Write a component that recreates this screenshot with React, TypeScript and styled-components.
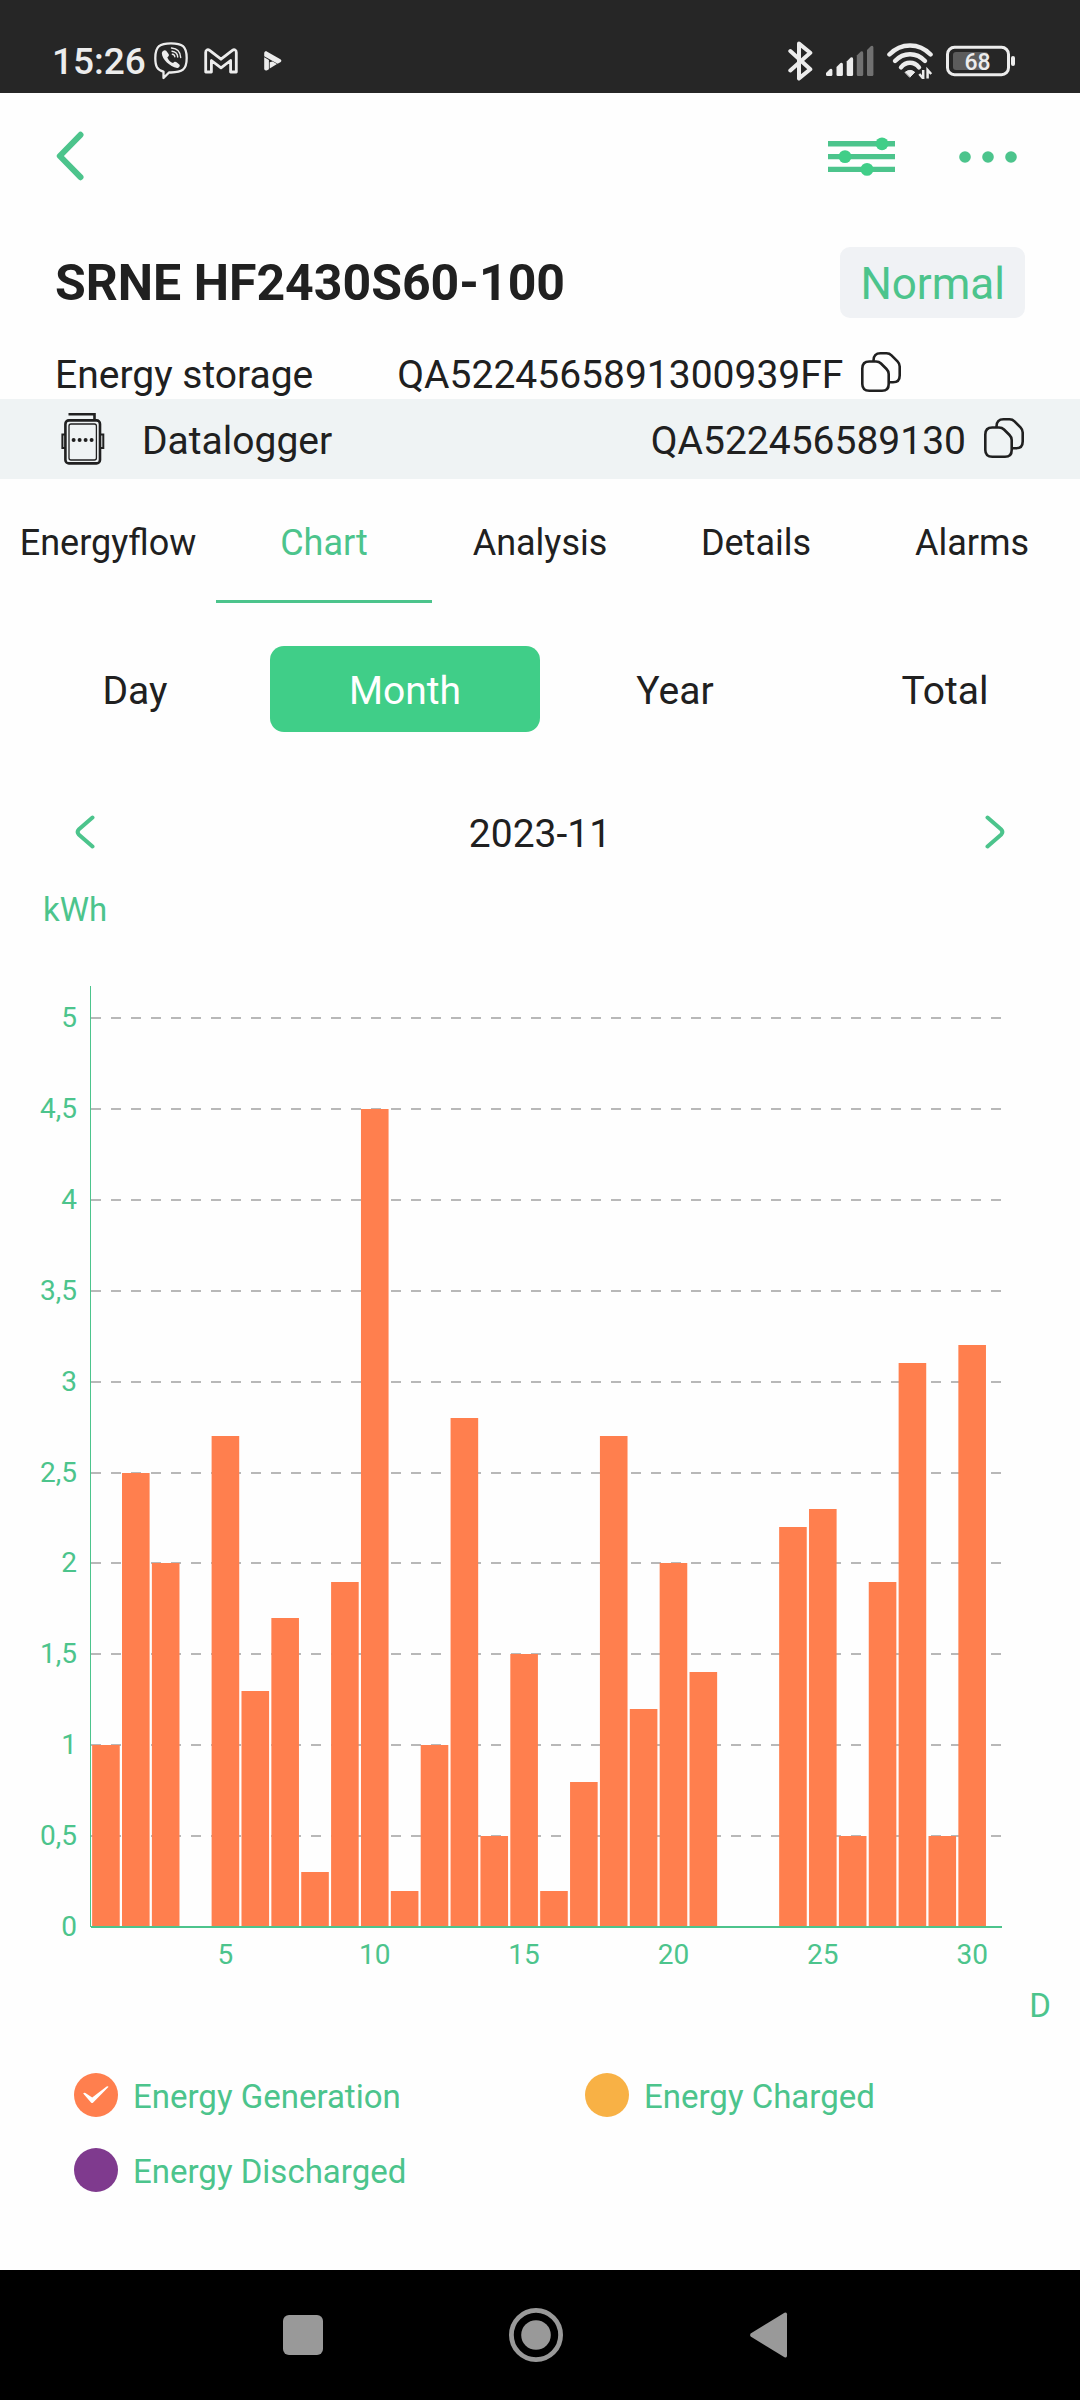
import React, { useState } from 'react';
import styled, { createGlobalStyle } from 'styled-components';

const color = {
  green: '#40ce88',
  line: '#4cc48c',
  text: '#202020',
  page: '#fefefe',
  band: '#eff3f4',
  badge: '#f0f2f5',
  orange: '#ff7f4e',
  amber: '#f8b145',
  purple: '#7f3a8e',
  grid: '#b8b8b8',
  status: '#ececec',
  nav: '#999999',
};

const GlobalStyle = createGlobalStyle`
  *, *::before, *::after { box-sizing: border-box; }
  body {
    margin: 0;
    background: ${color.page};
    color: ${color.text};
    font-family: Roboto, "Noto Sans", sans-serif;
  }
  svg { display: block; }
  button {
    border: 0;
    padding: 0;
    background: none;
    color: inherit;
    font: inherit;
    cursor: pointer;
  }
`;

const Screen = styled.div`
  display: flex;
  flex-direction: column;
  min-height: 100vh;
`;

const StatusBar = styled.header`
  display: flex;
  justify-content: space-between;
  padding: 39px 64px 10px 52px;
  background: #262626;
  color: ${color.status};
`;

const StatusGroup = styled.div<{ $gap: number }>`
  display: flex;
  align-items: center;
  gap: ${(p) => p.$gap}px;
  height: 44px;
`;

const Clock = styled.time`
  padding-top: 2px;
  font-size: 37px;
  font-weight: 500;
  line-height: 42px;
`;

const NotificationIcons = styled.div`
  display: flex;
  align-items: center;
  gap: 16px;
`;

const PlayMark = styled.span`
  padding-left: 10px;
`;

const Content = styled.main`
  flex: 1;
  padding-bottom: 78px;
`;

const TopBar = styled.nav`
  display: flex;
  align-items: center;
  justify-content: space-between;
  min-height: 126px;
  padding: 0 63px 0 55px;
`;

const TopActions = styled.div`
  display: flex;
  align-items: center;
  gap: 63px;
`;

const DeviceHead = styled.section`
  padding: 28px 55px 0;
`;

const TitleRow = styled.div`
  display: flex;
  align-items: center;
  justify-content: space-between;
`;

const Title = styled.h1`
  margin: 0;
  font-size: 50px;
  font-weight: 700;
  line-height: 60px;
`;

const Badge = styled.span`
  padding: 11px 20px 8px;
  border-radius: 10px;
  background: ${color.badge};
  color: ${color.line};
  font-size: 44px;
  line-height: 52px;
`;

const InfoRow = styled.div`
  display: flex;
  align-items: center;
  gap: 84px;
  padding-top: 33px;
  font-size: 39px;
  line-height: 48px;
`;

const Serial = styled.span`
  display: flex;
  align-items: center;
  gap: 18px;
`;

const LoggerBand = styled.section`
  display: flex;
  align-items: center;
  justify-content: space-between;
  padding: 18px 56px 14px 61px;
  background: ${color.band};
  font-size: 39px;
  line-height: 48px;
`;

const LoggerName = styled.span`
  display: flex;
  align-items: center;
  gap: 37px;
  height: 48px;
`;

const Tabs = styled.div`
  display: grid;
  grid-template-columns: repeat(5, 1fr);
`;

const Tab = styled.button<{ $active: boolean }>`
  && {
    padding: 43px 0 36px;
    border-bottom: 3px solid ${(p) => (p.$active ? color.line : 'transparent')};
    color: ${(p) => (p.$active ? color.line : color.text)};
    font-size: 36px;
    line-height: 42px;
    text-align: center;
  }
`;

const Periods = styled.div`
  display: grid;
  grid-template-columns: repeat(4, 1fr);
  margin-top: 43px;
`;

const Period = styled.button<{ $active: boolean }>`
  && {
    padding: 22px 0 18px;
    border-radius: 14px;
    background: ${(p) => (p.$active ? color.green : 'transparent')};
    color: ${(p) => (p.$active ? '#fff' : color.text)};
    font-size: 39px;
    line-height: 46px;
  }
`;

const DateRow = styled.div`
  display: flex;
  align-items: center;
  justify-content: space-between;
  padding: 79px 74px 0;
  font-size: 39px;
  line-height: 46px;
`;

const Unit = styled.p<{ $end?: boolean }>`
  margin: 0;
  padding: ${(p) => (p.$end ? '16px 29px 0' : '33px 43px 0')};
  color: ${color.line};
  font-size: 33px;
  line-height: 40px;
  text-align: ${(p) => (p.$end ? 'right' : 'left')};
`;

const ChartSvg = styled.svg`
  width: 100%;
  height: auto;

  text {
    fill: ${color.line};
    font-size: 28px;
  }
`;

const Legend = styled.div`
  display: grid;
  grid-template-columns: repeat(2, 1fr);
  gap: 31px 0;
  padding: 47px 0 0 74px;
  margin-right: -16px;
  overflow: hidden;
`;

const LegendItem = styled.label`
  display: flex;
  align-items: center;
  gap: 15px;
  color: ${color.line};
  font-size: 33px;
  line-height: 40px;
  cursor: pointer;
`;

const LegendText = styled.span`
  padding-top: 4px;
`;

const Mark = styled.span`
  display: grid;
  place-items: center;

  > * {
    grid-area: 1 / 1;
  }

  svg {
    pointer-events: none;
  }
`;

const Check = styled.input<{ $color: string }>`
  appearance: none;
  width: 44px;
  height: 44px;
  margin: 0;
  border-radius: 50%;
  background: ${(p) => p.$color};
`;

const SystemNav = styled.footer`
  display: flex;
  align-items: center;
  justify-content: center;
  gap: 179px;
  height: 130px;
  padding-right: 8px;
  background: #000;
`;

const NavButton = styled.button`
  && {
    display: grid;
    place-items: center;
    width: 54px;
    height: 54px;
  }
`;

const ViberIcon = () => (
  <svg width="34" height="38" viewBox="0 0 34 38" fill="none" stroke="currentColor">
    <path
      d="M17 1.3C28 1.3 32.7 4 32.7 16S28 30.3 17 30.5H15L9.5 36V29.6C3 28 1.3 24 1.3 16 1.3 4 6 1.3 17 1.3Z"
      strokeWidth="2.3"
      strokeLinejoin="round"
    />
    <path
      d="M7.8 11C8.5 8.5 11 7.6 12.2 8.8L14.6 12C15.4 13.4 14.8 14.2 13.3 15.5 14.3 18 16.5 20.2 19 21 20.5 19.4 21.5 19.3 22.6 20.2L25.3 22.4C26.6 23.6 25 26 23 26 16 24.5 8 17.5 7.8 11Z"
      fill="currentColor"
      stroke="none"
    />
    <path d="M17.5 6C23.5 6.5 26.5 10 26.7 15.6M18 9.2C21.7 9.6 23.5 11.6 23.7 15M18.3 12.2C20 12.4 20.7 13.3 20.8 14.8" strokeWidth="1.4" strokeLinecap="round" />
  </svg>
);

const MailIcon = () => (
  <svg width="34" height="26" viewBox="0 0 34 26" fill="none" stroke="currentColor">
    <path
      d="M1.7 24V4.5C1.7 1.8 3.7 .9 5.6 2.4L17 11.2 28.4 2.4C30.3 .9 32.3 1.8 32.3 4.5V24H26.6V12.5L17 19.8 7.4 12.5V24Z"
      strokeWidth="2.8"
      strokeLinejoin="round"
    />
  </svg>
);

const PlayIcon = () => (
  <svg width="18" height="20" viewBox="0 0 18 20" fill="currentColor">
    <path d="M.2 2.2C.4.4 1.8-.1 3.2.7L16.4 8.2C17.7 9.1 17.7 10.3 16.4 11.2L13.6 12.7.2 5.2Z" />
    <path d="M.2 6.2 4.9 8.9V18.3L3.2 19.2C1.5 20 .2 19.2.2 17.6Z" />
    <path d="M5.7 11.2 8.6 10.6 13 13.1 5.7 17.6Z" />
  </svg>
);

const BluetoothIcon = () => (
  <svg width="25" height="40" viewBox="0 0 25 40" fill="none" stroke="currentColor" strokeWidth="4" strokeLinecap="round" strokeLinejoin="round">
    <path d="M2.3 10 22.3 28.3 11 37.4V2.6L22.3 11.7 2.3 29.5" />
  </svg>
);

const SignalIcon = () => (
  <svg width="48" height="32" viewBox="0 0 48 32" fill="currentColor">
    {[
      [0, 23.5],
      [10.5, 17.5],
      [20.7, 12],
      [30.8, 6],
      [41, 0.5],
    ].map(([x, y], i) => (
      <path key={x} opacity={i > 2 ? 0.38 : 1} d={`M${x} ${y + 4.5} ${x + 4} ${y + 0.5}Q${x + 6.4} ${y - 0.5} ${x + 6.4} ${y + 2}V29.5Q${x + 6.4} 31 ${x + 5} 31H${x + 1.4}Q${x} 31 ${x} 29.5Z`} />
    ))}
  </svg>
);

const WifiIcon = () => (
  <svg width="46" height="36" viewBox="0 0 46 36" fill="none" stroke="currentColor" strokeWidth="4.4" strokeLinecap="round">
    <path d="M2.4 11.5C14-.6 32-.6 43.6 11.5" />
    <path d="M8 18C16.5 9 29.5 9 38 18" />
    <path d="M14 24.3C19 18.2 27 18.2 32 24.3" />
    <path d="M18.3 29.2Q23 25.4 27.7 29.2L23 34Z" fill="currentColor" strokeWidth="1" strokeLinejoin="round" />
    <path d="M36.2 27V35.5L32.3 31M40.6 35.5V27L44.2 31" strokeWidth="2.5" strokeLinecap="butt" />
  </svg>
);

const BatteryIcon = () => (
  <svg width="70" height="32" viewBox="0 0 70 32" role="img" aria-label="Battery 68%">
    <rect x="1.5" y="2.3" width="61" height="27.4" rx="7" fill="none" stroke="currentColor" strokeWidth="3" />
    <rect x="7" y="7" width="35" height="18" rx="3" fill="#5c5c5c" />
    <rect x="65" y="11" width="4" height="10" rx="2" fill="currentColor" />
    <text x="31.5" y="24.6" textAnchor="middle" fontSize="23" fontWeight="500" fill="currentColor">68</text>
  </svg>
);

const BackIcon = () => (
  <svg width="30" height="50" viewBox="0 0 30 50" fill="none" stroke={color.line} strokeWidth="6" strokeLinecap="round" strokeLinejoin="round">
    <path d="M25.5 3.8 4.8 25 25.5 46.2" />
  </svg>
);

const SlidersIcon = () => (
  <svg width="68" height="40" viewBox="0 0 68 40">
    <path d="M0 7.8H67M0 20.6H67M0 33.4H67" stroke={color.line} strokeWidth="5.4" />
    <g fill={color.green}>
      <circle cx="54" cy="7.8" r="6.4" />
      <circle cx="17" cy="20.6" r="6.4" />
      <circle cx="39" cy="33.4" r="6.4" />
    </g>
  </svg>
);

const DotsIcon = () => (
  <svg width="58" height="14" viewBox="0 0 58 14" fill={color.line}>
    <circle cx="6" cy="8" r="5.8" />
    <circle cx="29" cy="8" r="5.8" />
    <circle cx="52" cy="8" r="5.8" />
  </svg>
);

const CopyIcon = () => (
  <svg width="40" height="46" viewBox="0 0 40 46" fill="none" stroke={color.text} strokeWidth="2.6" strokeLinejoin="round">
    <path d="M1.3 16.5Q1.3 9.5 8.3 9.5H15Q18 9.5 20 11.5L25.5 17Q27.7 19.2 27.7 22V32Q27.7 38.8 21 38.8H8.3Q1.3 38.8 1.3 32Z" />
    <path d="M12.5 9.5V8.5Q12.5 1.3 19.5 1.3H25.5Q28.5 1.3 30.5 3.3L36.5 9.3Q38.7 11.5 38.7 14.5V23.5Q38.7 30.3 32 30.3H28" />
  </svg>
);

const LoggerIcon = () => (
  <svg width="44" height="58" viewBox="0 0 44 58" fill="none" stroke={color.text}>
    <path d="M7.5 2.2H33.5V8" strokeWidth="2.6" />
    <rect x="4.4" y="8.4" width="34.6" height="43" rx="3.5" strokeWidth="2.6" />
    <rect x="8" y="12" width="27.4" height="36" rx="2" strokeWidth="1.3" />
    <path d="M4 22.5H1.4V36H4M39.4 22.5H42.3V36H39.4" strokeWidth="2" />
    <g fill={color.text} stroke="none">
      <circle cx="12.6" cy="28" r="2" />
      <circle cx="18.6" cy="28" r="2" />
      <circle cx="24.6" cy="28" r="2" />
      <circle cx="30.6" cy="28" r="2" />
    </g>
  </svg>
);

const StepIcon = ({ forward = false }: { forward?: boolean }) => (
  <svg width="22" height="38" viewBox="0 0 22 38" fill="none" stroke={color.line} strokeWidth="4" strokeLinecap="round" strokeLinejoin="round">
    <path d={forward ? 'M3.5 2.5 17.3 14.6Q19.4 17 17.3 19.4L3.5 31.5' : 'M18.5 2.5 4.7 14.6Q2.6 17 4.7 19.4L18.5 31.5'} />
  </svg>
);

const generation = [
  1, 2.5, 2, 0, 2.7, 1.3, 1.7, 0.3, 1.9, 4.5, 0.2, 1, 2.8, 0.5, 1.5,
  0.2, 0.8, 2.7, 1.2, 2, 1.4, 0, 0, 2.2, 2.3, 0.5, 1.9, 3.1, 0.5, 3.2,
];
const ticks = [0, 0.5, 1, 1.5, 2, 2.5, 3, 3.5, 4, 4.5, 5];
const plot = { left: 91, right: 1002, top: 56, base: 997, unit: 181.8, slot: 29.87, bar: 27.6 };

const levelY = (value: number) => Math.round(plot.base - value * plot.unit);

const EnergyChart = ({ visible }: { visible: boolean }) => (
  <ChartSvg viewBox="0 0 1080 1040" role="img" aria-label="Daily energy, November 2023, kWh">
    {ticks.slice(1).map((t) => (
      <line
        key={t}
        x1={plot.left}
        x2={plot.right}
        y1={levelY(t)}
        y2={levelY(t)}
        stroke={color.grid}
        strokeWidth="2"
        strokeDasharray="10 10"
      />
    ))}
    <line x1={plot.left - 0.5} x2={plot.left - 0.5} y1={plot.top} y2={plot.base} stroke={color.line} />
    {visible &&
      generation.map((v, i) => (
        <rect
          key={i}
          x={plot.left + (i + 0.5) * plot.slot - plot.bar / 2}
          y={levelY(v)}
          width={plot.bar}
          height={plot.base - levelY(v)}
          fill={color.orange}
        />
      ))}
    <line x1={plot.left} x2={plot.right} y1={plot.base} y2={plot.base} stroke={color.line} strokeWidth="2" />
    {ticks.map((t) => (
      <text key={t} x="77" y={levelY(t) + 9} textAnchor="end">
        {String(t).replace('.', ',')}
      </text>
    ))}
    {[5, 10, 15, 20, 25, 30].map((d) => (
      <text key={d} x={plot.left + (d - 0.5) * plot.slot} y={plot.base + 37} textAnchor="middle">
        {d}
      </text>
    ))}
  </ChartSvg>
);

const series = [
  { id: 'generation', label: 'Energy Generation', color: color.orange },
  { id: 'charged', label: 'Energy Charged', color: color.amber },
  { id: 'discharged', label: 'Energy Discharged', color: color.purple },
];

export default function App() {
  const [tab, setTab] = useState('Chart');
  const [period, setPeriod] = useState('Month');
  const [shown, setShown] = useState<string[]>(['generation']);

  const toggle = (id: string) =>
    setShown((s) => (s.includes(id) ? s.filter((x) => x !== id) : [...s, id]));

  return (
    <Screen>
      <GlobalStyle />
      <StatusBar>
        <StatusGroup $gap={8}>
          <Clock>15:26</Clock>
          <NotificationIcons>
            <ViberIcon />
            <MailIcon />
            <PlayMark>
              <PlayIcon />
            </PlayMark>
          </NotificationIcons>
        </StatusGroup>
        <StatusGroup $gap={13}>
          <BluetoothIcon />
          <SignalIcon />
          <WifiIcon />
          <BatteryIcon />
        </StatusGroup>
      </StatusBar>

      <Content>
        <TopBar>
          <button type="button" aria-label="Back">
            <BackIcon />
          </button>
          <TopActions>
            <button type="button" aria-label="Settings">
              <SlidersIcon />
            </button>
            <button type="button" aria-label="More">
              <DotsIcon />
            </button>
          </TopActions>
        </TopBar>

        <DeviceHead>
          <TitleRow>
            <Title>SRNE HF2430S60-100</Title>
            <Badge>Normal</Badge>
          </TitleRow>
          <InfoRow>
            <span>Energy storage</span>
            <Serial>
              QA5224565891300939FF
              <button type="button" aria-label="Copy serial number">
                <CopyIcon />
              </button>
            </Serial>
          </InfoRow>
        </DeviceHead>

        <LoggerBand>
          <LoggerName>
            <LoggerIcon />
            Datalogger
          </LoggerName>
          <Serial>
            QA522456589130
            <button type="button" aria-label="Copy datalogger number">
              <CopyIcon />
            </button>
          </Serial>
        </LoggerBand>

        <Tabs role="tablist">
          {['Energyflow', 'Chart', 'Analysis', 'Details', 'Alarms'].map((t) => (
            <Tab key={t} type="button" role="tab" aria-selected={t === tab} $active={t === tab} onClick={() => setTab(t)}>
              {t}
            </Tab>
          ))}
        </Tabs>

        <Periods>
          {['Day', 'Month', 'Year', 'Total'].map((p) => (
            <Period key={p} type="button" aria-pressed={p === period} $active={p === period} onClick={() => setPeriod(p)}>
              {p}
            </Period>
          ))}
        </Periods>

        <DateRow>
          <button type="button" aria-label="Previous month">
            <StepIcon />
          </button>
          <time dateTime="2023-11">2023-11</time>
          <button type="button" aria-label="Next month">
            <StepIcon forward />
          </button>
        </DateRow>

        <Unit>kWh</Unit>
        <EnergyChart visible={shown.includes('generation')} />
        <Unit $end>D</Unit>

        <Legend>
          {series.map((s) => (
            <LegendItem key={s.id}>
              <Mark>
                <Check type="checkbox" $color={s.color} checked={shown.includes(s.id)} onChange={() => toggle(s.id)} />
                {shown.includes(s.id) && (
                  <svg width="28" height="20" viewBox="0 0 28 20" fill="#fff">
                    <path d="M1.2 8.6Q2 7.2 3.4 8L10.2 12.6 24.6 1.4Q26.6.8 26.4 2L11.2 17.4Q10 18.4 9 17.4Z" />
                  </svg>
                )}
              </Mark>
              <LegendText>{s.label}</LegendText>
            </LegendItem>
          ))}
        </Legend>
      </Content>

      <SystemNav>
        <NavButton type="button" aria-label="Recent apps">
          <svg width="40" height="40" viewBox="0 0 40 40">
            <rect width="40" height="40" rx="6" fill={color.nav} />
          </svg>
        </NavButton>
        <NavButton type="button" aria-label="Home">
          <svg width="54" height="54" viewBox="0 0 54 54">
            <circle cx="27" cy="27" r="24.6" fill="none" stroke={color.nav} strokeWidth="4.8" />
            <circle cx="27" cy="27" r="14.8" fill={color.nav} />
          </svg>
        </NavButton>
        <NavButton type="button" aria-label="Back to previous screen">
          <svg width="38" height="46" viewBox="0 0 38 46">
            <path d="M1 21.2Q-.8 23 1 24.8L34.5 45.2Q37 46.4 37 43.8V2.2Q37-.4 34.5.8Z" fill={color.nav} />
          </svg>
        </NavButton>
      </SystemNav>
    </Screen>
  );
}
